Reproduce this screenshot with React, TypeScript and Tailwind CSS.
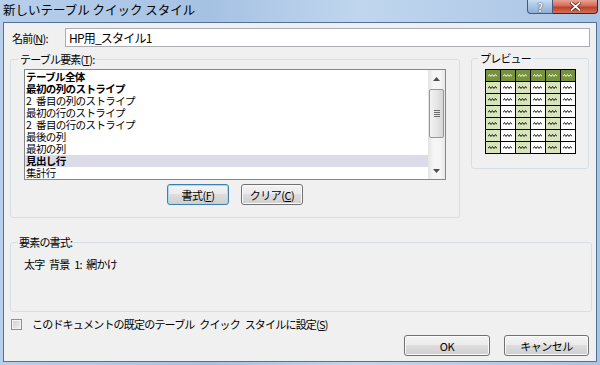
import React from "react";

const jp = "font-['Noto_Sans_CJK_JP','Noto_Sans',sans-serif]";

const items: { label: string; bold?: boolean; selected?: boolean }[] = [
  { label: "テーブル全体", bold: true },
  { label: "最初の列のストライプ", bold: true },
  { label: "2 番目の列のストライプ" },
  { label: "最初の行のストライプ" },
  { label: "2 番目の行のストライプ" },
  { label: "最後の列" },
  { label: "最初の列" },
  { label: "見出し行", bold: true, selected: true },
  { label: "集計行" },
];

function Squiggle({ color }: { color: string }) {
  return (
    <svg width="9" height="3" viewBox="0 0 9 3">
      <path
        d="M0 2.5 L1.5 0.5 L3 2.5 L4.5 0.5 L6 2.5 L7.5 0.5 L9 2.5"
        fill="none"
        stroke={color}
        strokeWidth="0.9"
      />
    </svg>
  );
}

function Btn({ children, focused, w }: { children: React.ReactNode; focused?: boolean; w: string }) {
  return (
    <button
      className={`${w} h-[21px] rounded-[3px] border text-[11px] leading-[12px] tracking-[-0.5px] text-black bg-[linear-gradient(#f3f3f3_0%,#ebebeb_45%,#dddddd_50%,#cfcfcf_100%)] ${
        focused ? "border-[#3c7fb1] shadow-[inset_0_0_0_1px_#a7d9f5]" : "border-[#707070] shadow-[inset_0_0_0_1px_#fbfbfb]"
      }`}
    >
      {children}
    </button>
  );
}

function Arrow({ up }: { up?: boolean }) {
  return (
    <svg width="7" height="4" viewBox="0 0 7 4">
      <path d={up ? "M0 4 L3.5 0 L7 4 Z" : "M0 0 L3.5 4 L7 0 Z"} fill="#4d4d4d" />
    </svg>
  );
}

export default function App() {
  return (
    <div className={`w-[600px] h-[365px] flex flex-col overflow-hidden bg-[linear-gradient(90deg,#b7cfea_0%,#a6c2e3_35%,#c0d6ee_60%,#a9c4e4_100%)] ${jp}`}>
      {/* title bar */}
      <div className="h-[22px] flex items-start">
        <div className="pl-[3px] pt-[2px] text-[12.5px] leading-[16px] text-black">新しいテーブル クイック スタイル</div>
        <div className="ml-auto mr-[2px] flex">
          <div className="w-[26px] h-[14px] rounded-bl-[4px] border border-t-0 border-[#3e5c86] bg-[linear-gradient(#c9dcf2_0%,#a9c3e3_50%,#8faed6_100%)] flex items-center justify-center pt-[1px] text-[11px] leading-[11px] font-bold text-white [text-shadow:0_0_1px_#20304a,0_0_1px_#20304a]">
            ?
          </div>
          <div className="w-[45px] h-[14px] rounded-br-[4px] border border-t-0 border-l-0 border-[#5a1d16] bg-[linear-gradient(#e8a393_0%,#d46a55_45%,#c0402a_55%,#d0705a_100%)] flex items-center justify-center">
            <svg width="11" height="9" viewBox="0 0 11 9">
              <path d="M1.5 1 L9.5 8 M9.5 1 L1.5 8" stroke="#4a1208" strokeWidth="3.2" strokeLinecap="square" />
              <path d="M1.5 1 L9.5 8 M9.5 1 L1.5 8" stroke="#ffffff" strokeWidth="1.8" strokeLinecap="square" />
            </svg>
          </div>
        </div>
      </div>

      {/* client area */}
      <div className="flex-1 mx-[3px] mb-[3px] border border-[#51719c] bg-[#f0f0f0] pl-[6px] pr-[4px] text-[11px] leading-[12px] tracking-[-0.8px] [word-spacing:3px] text-black">
        {/* name row */}
        <div className="mt-[5px] flex items-center h-[19px] mr-[2px]">
          <div className="w-[55px] pl-[2px]">
            名前(<span className="underline">N</span>):
          </div>
          <div className="flex-1 h-[19px] border border-[#abadb3] bg-white pl-[3px] flex items-center text-[12px]">
            HP用_スタイル1
          </div>
        </div>

        {/* groups row */}
        <div className="mt-[6px] flex items-start gap-[11px]">
          <fieldset className="w-[450px] h-[165px] border border-[#d5dfe5] rounded-[3px]">
            <legend className="ml-[7px] px-[2px]">
              テーブル要素(<span className="underline">T</span>):
            </legend>
            <div className="mt-[4px] ml-[13px] w-[422px] h-[111px] border border-[#828790] bg-white flex">
              <div className="flex-1 pt-[1px] text-[10.5px] tracking-[-0.6px]">
                {items.map((it) => (
                  <div
                    key={it.label}
                    className={`h-[12px] leading-[12px] pl-[1px] whitespace-nowrap ${it.bold ? "font-bold" : ""} ${
                      it.selected ? "bg-[#dcdce8]" : ""
                    }`}
                  >
                    {it.label}
                  </div>
                ))}
              </div>
              <div className="w-[17px] flex flex-col bg-[linear-gradient(90deg,#e3e3e3,#f5f5f5_30%,#f5f5f5_70%,#e8e8e8)]">
                <div className="h-[17px] flex items-center justify-center">
                  <Arrow up />
                </div>
                <div className="mt-[2px] mx-[1px] h-[49px] rounded-[2px] border border-[#979797] bg-[linear-gradient(90deg,#f2f2f2,#e6e6e6_50%,#d6d6d6)] flex flex-col items-center justify-center gap-[1px]">
                  <div className="w-[6px] h-px bg-[#6b6b6b]" />
                  <div className="w-[6px] h-px bg-[#6b6b6b]" />
                  <div className="w-[6px] h-px bg-[#6b6b6b]" />
                  <div className="w-[6px] h-px bg-[#6b6b6b]" />
                </div>
                <div className="flex-1" />
                <div className="h-[17px] flex items-center justify-center">
                  <Arrow />
                </div>
              </div>
            </div>
            <div className="mt-[4px] flex justify-center gap-[12px]">
              <Btn w="w-[62px]" focused>
                書式(<span className="underline">F</span>)
              </Btn>
              <Btn w="w-[62px]">
                クリア(<span className="underline">C</span>)
              </Btn>
            </div>
          </fieldset>

          <fieldset className="w-[118px] h-[117px] -mt-[1px] border border-[#d5dfe5] rounded-[3px]">
            <legend className="ml-[6px] px-[2px]">プレビュー</legend>
            <div className="mt-[5px] flex justify-center">
              <div className="grid grid-cols-[repeat(6,14px)] grid-rows-[repeat(7,11px)] gap-px p-px bg-black">
                {Array.from({ length: 42 }).map((_, i) => {
                  const r = Math.floor(i / 6);
                  const c = i % 6;
                  const bg = r === 0 ? "bg-[#76923c]" : c % 2 === 0 ? "bg-[#d7e4bc]" : "bg-white";
                  return (
                    <div key={i} className={`${bg} flex items-center justify-center`}>
                      <Squiggle color={r === 0 ? "#ffffff" : "#000000"} />
                    </div>
                  );
                })}
              </div>
            </div>
          </fieldset>
        </div>

        {/* format description */}
        <fieldset className="mt-[18px] h-[76px] border border-[#d5dfe5] rounded-[3px]">
          <legend className="ml-[7px] px-[1px]">要素の書式:</legend>
          <div className="mt-[10px] ml-[13px]">太字 背景 1: 網かけ</div>
        </fieldset>

        {/* checkbox */}
        <div className="mt-[6px] flex items-center h-[12px]">
          <div className="ml-[1px] w-[11px] h-[11px] border border-[#8e8f8f] bg-[linear-gradient(135deg,#cfcfcf,#f2f2f2)] shadow-[inset_0_0_0_1px_#f4f4f4]" />
          <div className="ml-[10px] whitespace-nowrap">
            このドキュメントの既定のテーブル クイック スタイルに設定(<span className="underline">S</span>)
          </div>
        </div>

        {/* ok / cancel */}
        <div className="mt-[5px] pr-[3px] flex justify-end gap-[14px]">
          <Btn w="w-[86px]">OK</Btn>
          <Btn w="w-[85px]">キャンセル</Btn>
        </div>
      </div>
    </div>
  );
}
